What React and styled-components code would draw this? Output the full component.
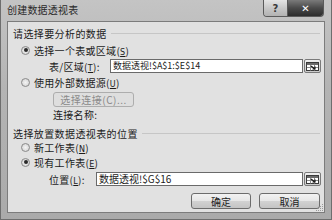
import React from 'react'
import styled, { createGlobalStyle } from 'styled-components'

const GlobalStyle = createGlobalStyle`
  html, body {
    margin: 0;
    padding: 0;
    background: #9a9a9a;
  }
  body {
    font-family: "Noto Sans CJK SC", "Noto Sans", sans-serif;
    font-size: 10px;
    color: #1c1c1c;
  }
`

const Window = styled.div`
  width: 332px;
  height: 220px;
  box-sizing: border-box;
  display: flex;
  flex-direction: column;
  background: linear-gradient(to bottom, #c4c4c4 0%, #b4b4b4 40%, #aaaaaa 100%);
  border-left: 1px solid #6e6e6e;
  border-right: 1px solid #6e6e6e;
  border-bottom: 1px solid #6e6e6e;
  overflow: hidden;
`

const TitleBar = styled.div`
  height: 21px;
  flex: none;
  display: flex;
  align-items: flex-start;
  padding-left: 6px;
  padding-right: 7px;
`

const Title = styled.div`
  flex: 1;
  line-height: 20px;
  font-size: 10px;
  color: #2a2a2a;
  letter-spacing: 0.2px;
`

const Caption = styled.div`
  display: flex;
  height: 16px;
  border: 1px solid #5a5a5a;
  border-top: none;
  border-radius: 0 0 4px 4px;
  overflow: hidden;
`

const CaptionButton = styled.div`
  width: ${({ wide }) => (wide ? '35px' : '23px')};
  display: flex;
  align-items: center;
  justify-content: center;
  background: ${({ dark }) =>
    dark
      ? 'linear-gradient(to bottom, #7a7a7a 0%, #4a4a4a 50%, #2c2c2c 100%)'
      : 'linear-gradient(to bottom, #e4e4e4 0%, #c8c8c8 50%, #b2b2b2 100%)'};
  border-left: ${({ dark }) => (dark ? '1px solid #5a5a5a' : 'none')};
  color: ${({ dark }) => (dark ? '#fff' : '#3a3a3a')};
  font-weight: bold;
  font-family: "DejaVu Sans", sans-serif;
  font-size: 10px;
`

const Client = styled.div`
  flex: 1;
  margin: 0 6px 6px 6px;
  border: 1px solid #7c7c7c;
  background: #e1e1e1;
  box-sizing: border-box;
  padding: 4px 3px 0 4px;
  display: flex;
  flex-direction: column;
  position: relative;
`

const Legend = styled.div`
  display: flex;
  align-items: center;
  height: 12px;
  margin-top: ${({ top }) => top}px;
  padding-left: 1px;
  gap: 4px;
  letter-spacing: 0.4px;
`

const Rule = styled.div`
  flex: 1;
  height: 1px;
  background: #c6c6c6;
  margin-right: 1px;
`

const OptionRow = styled.label`
  display: flex;
  align-items: center;
  height: 12px;
  margin-top: ${({ top }) => top}px;
  padding-left: 9px;
  gap: 4px;
  letter-spacing: 0.3px;
`

const Radio = styled.span`
  width: 9px;
  height: 9px;
  box-sizing: border-box;
  border-radius: 50%;
  border: 1px solid #8a8a8a;
  background: radial-gradient(circle, #f4f4f4 0%, #cfcfcf 100%);
  display: flex;
  align-items: center;
  justify-content: center;

  &::after {
    content: '';
    width: 4px;
    height: 4px;
    border-radius: 50%;
    background: ${({ checked }) => (checked ? '#2a2a2a' : 'transparent')};
  }
`

const Key = styled.span`
  text-decoration: underline;
  font-family: "DejaVu Sans", sans-serif;
  font-size: 8px;
`

const FieldRow = styled.div`
  display: flex;
  align-items: center;
  height: 14px;
  margin-top: ${({ top }) => top}px;
  padding-left: 37px;
`

const FieldLabel = styled.span`
  width: ${({ w }) => w}px;
  flex: none;
  letter-spacing: 0.3px;
`

const Input = styled.div`
  flex: 1;
  height: 14px;
  box-sizing: border-box;
  border: 1px solid #6a6a6a;
  background: #fff;
  padding-left: 2px;
  line-height: 12px;
  font-size: ${({ big }) => (big ? 10 : 9)}px;
  white-space: nowrap;
  overflow: hidden;
`

const RefButton = styled.div`
  width: 17px;
  height: 14px;
  margin-left: 1px;
  box-sizing: border-box;
  border: 1px solid #7a7a7a;
  border-radius: 2px;
  background: linear-gradient(to bottom, #f0f0f0, #cacaca);
  display: flex;
  align-items: center;
  justify-content: center;
`

const PushButton = styled.div`
  width: ${({ w }) => w}px;
  height: ${({ h }) => h}px;
  box-sizing: border-box;
  border: 1px solid ${({ disabled }) => (disabled ? '#adadad' : '#6c6c6c')};
  border-radius: 3px;
  background: ${({ disabled }) =>
    disabled
      ? '#dedede'
      : 'linear-gradient(to bottom, #f2f2f2 0%, #e6e6e6 50%, #d2d2d2 51%, #c4c4c4 100%)'};
  color: ${({ disabled }) => (disabled ? '#8a8a8a' : '#1c1c1c')};
  display: flex;
  align-items: center;
  justify-content: center;
  letter-spacing: ${({ disabled }) => (disabled ? '0.5px' : '0')};
`

const ButtonRow = styled.div`
  display: flex;
  padding-left: ${({ indent }) => indent}px;
  margin-top: ${({ top }) => top}px;
`

const Plain = styled.div`
  padding-left: 41px;
  height: 10px;
  line-height: 10px;
  margin-top: ${({ top }) => top}px;
  letter-spacing: 0.3px;
`

const Footer = styled.div`
  display: flex;
  justify-content: flex-end;
  gap: 8px;
  margin-top: 7px;
  padding-right: 1px;
`

const Grip = styled.svg`
  position: absolute;
  right: 0;
  bottom: 0;
`

const RangeIcon = () => (
  <svg width="13" height="9" viewBox="0 0 13 9">
    <rect x="0.5" y="0.5" width="12" height="8" fill="#fff" stroke="#3a3a3a" />
    <rect x="1" y="1" width="11" height="2" fill="#6a6a6a" />
    <path d="M1 5.5h11M4.5 3v5.5M8.5 3v5.5" stroke="#8a8a8a" strokeWidth="1" />
    <path d="M5 4l4 3M9 4.5v2.5H6.5" stroke="#1a1a1a" strokeWidth="1.2" fill="none" />
  </svg>
)

export default function App() {
  return (
    <>
      <GlobalStyle />
      <Window>
        <TitleBar>
          <Title>创建数据透视表</Title>
          <Caption>
            <CaptionButton>?</CaptionButton>
            <CaptionButton dark wide>✕</CaptionButton>
          </Caption>
        </TitleBar>
        <Client>
          <Legend top={1}>
            请选择要分析的数据
            <Rule />
          </Legend>
          <OptionRow top={5}>
            <Radio checked />
            <span>
              选择一个表或区域(<Key>S</Key>)
            </span>
          </OptionRow>
          <FieldRow top={3}>
            <FieldLabel w={61}>
              表/区域(<Key>T</Key>):
            </FieldLabel>
            <Input>数据透视!$A$1:$E$14</Input>
            <RefButton>
              <RangeIcon />
            </RefButton>
          </FieldRow>
          <OptionRow top={3}>
            <Radio />
            <span>
              使用外部数据源(<Key>U</Key>)
            </span>
          </OptionRow>
          <ButtonRow indent={41} top={4}>
            <PushButton disabled w={81} h={15}>
              选择连接(C)...
            </PushButton>
          </ButtonRow>
          <Plain top={3}>连接名称:</Plain>
          <Legend top={7}>
            选择放置数据透视表的位置
            <Rule />
          </Legend>
          <OptionRow top={2}>
            <Radio />
            <span>
              新工作表(<Key>N</Key>)
            </span>
          </OptionRow>
          <OptionRow top={3}>
            <Radio checked />
            <span>
              现有工作表(<Key>E</Key>)
            </span>
          </OptionRow>
          <FieldRow top={4}>
            <FieldLabel w={47}>
              位置(<Key>L</Key>):
            </FieldLabel>
            <Input big>数据透视!$G$16</Input>
            <RefButton>
              <RangeIcon />
            </RefButton>
          </FieldRow>
          <Footer>
            <PushButton w={60} h={16}>确定</PushButton>
            <PushButton w={61} h={16}>取消</PushButton>
          </Footer>
          <Grip width="9" height="9" viewBox="0 0 9 9">
            <g fill="#9a9a9a">
              <rect x="7" y="1" width="1" height="1" />
              <rect x="5" y="3" width="1" height="1" />
              <rect x="7" y="3" width="1" height="1" />
              <rect x="3" y="5" width="1" height="1" />
              <rect x="5" y="5" width="1" height="1" />
              <rect x="7" y="5" width="1" height="1" />
              <rect x="1" y="7" width="1" height="1" />
              <rect x="3" y="7" width="1" height="1" />
              <rect x="5" y="7" width="1" height="1" />
              <rect x="7" y="7" width="1" height="1" />
            </g>
          </Grip>
        </Client>
      </Window>
    </>
  )
}
